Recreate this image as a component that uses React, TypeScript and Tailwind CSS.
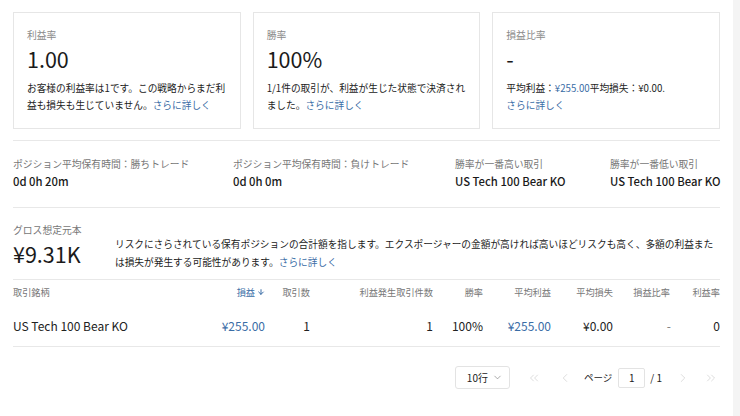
import { ChevronDown, ChevronLeft, ChevronRight, ChevronsLeft, ChevronsRight, ArrowDown } from "lucide-react";

const font = { fontFamily: '"Noto Sans CJK JP", "Noto Sans", sans-serif' };

function Link({ children }: { children: React.ReactNode }) {
  return <span className="text-[#3a6da6]">{children}</span>;
}

function Card({ label, value, children }: { label: string; value: string; children: React.ReactNode }) {
  return (
    <div className="border border-[#e6e6e6] px-[13px] pt-[14px] h-[117px]">
      <div className="text-[9.8px] leading-[16px] text-[#8a8a8a]">{label}</div>
      <div className="text-[21.5px] leading-[28px] mt-[2px] text-[#1a1a1a]">{value}</div>
      <div className="text-[9.7px] leading-[17px] mt-[7px] text-[#222]">{children}</div>
    </div>
  );
}

function Stat({ label, value }: { label: string; value: string }) {
  return (
    <div>
      <div className="text-[9.8px] leading-[17px] text-[#777] whitespace-nowrap">{label}</div>
      <div className="text-[11.3px] leading-[17px] font-medium text-[#1a1a1a] whitespace-nowrap">{value}</div>
    </div>
  );
}

const cols = "grid grid-cols-[187px_65px_45px_123px_50px_68px_62px_61px_46px]";

export default function App() {
  return (
    <div className="flex w-[740px] h-[416px] bg-white overflow-hidden" style={font}>
      <div className="w-[733px] pl-[13px] pr-[13px] pt-[12px]">
        <div className="grid grid-cols-3 gap-[12px]">
          <Card label="利益率" value="1.00">
            お客様の利益率は1です。この戦略からまだ利益も損失も生じていません。<Link>さらに詳しく</Link>
          </Card>
          <Card label="勝率" value="100%">
            1/1件の取引が、利益が生じた状態で決済されました。<Link>さらに詳しく</Link>
          </Card>
          <Card label="損益比率" value="-">
            平均利益：<Link>¥255.00</Link>平均損失：¥0.00.
            <br />
            <Link>さらに詳しく</Link>
          </Card>
        </div>

        <div className="border-t border-[#e8e8e8] mt-[11px] pt-[15px] pb-[17px]">
          <div className="grid grid-cols-[220px_222px_155px_1fr]">
            <Stat label="ポジション平均保有時間：勝ちトレード" value="0d 0h 20m" />
            <Stat label="ポジション平均保有時間：負けトレード" value="0d 0h 0m" />
            <Stat label="勝率が一番高い取引" value="US Tech 100 Bear KO" />
            <Stat label="勝率が一番低い取引" value="US Tech 100 Bear KO" />
          </div>
        </div>

        <div className="border-t border-[#e8e8e8] pt-[14px] pb-[8px] flex">
          <div className="w-[102px] shrink-0">
            <div className="text-[9.8px] leading-[17px] text-[#777]">グロス想定元本</div>
            <div className="text-[21.5px] leading-[30px] text-[#1a1a1a]">¥9.31K</div>
          </div>
          <div className="text-[9.7px] leading-[18px] text-[#222] pt-[13px]">
            リスクにさらされている保有ポジションの合計額を指します。エクスポージャーの金額が高ければ高いほどリスクも高く、多額の利益または損失が発生する可能性があります。<Link>さらに詳しく</Link>
          </div>
        </div>

        <div className="border-t border-[#e8e8e8]">
          <div className={`${cols} text-[9.2px] text-[#777] h-[25px] items-center`}>
            <div>取引銘柄</div>
            <div className="text-right text-[#3a6da6] flex justify-end items-center gap-[2px]">
              損益<ArrowDown size={8} strokeWidth={3} />
            </div>
            <div className="text-right">取引数</div>
            <div className="text-right">利益発生取引件数</div>
            <div className="text-right">勝率</div>
            <div className="text-right">平均利益</div>
            <div className="text-right">平均損失</div>
            <div className="text-right pr-[4px]">損益比率</div>
            <div className="text-right">利益率</div>
          </div>
          <div className={`${cols} text-[12px] text-[#222] h-[42px] items-center border-b border-[#e8e8e8]`}>
            <div>US Tech 100 Bear KO</div>
            <div className="text-right text-[#3a6da6]">¥255.00</div>
            <div className="text-right">1</div>
            <div className="text-right">1</div>
            <div className="text-right">100%</div>
            <div className="text-right text-[#3a6da6]">¥255.00</div>
            <div className="text-right">¥0.00</div>
            <div className="text-right pr-[3px] text-[#777]">-</div>
            <div className="text-right">0</div>
          </div>
        </div>

        <div className="flex justify-end items-center mt-[19px] text-[10px] text-[#222]">
          <div className="flex items-center gap-[4px] border border-[#e3e3e3] rounded-[3px] h-[23px] pl-[11px] pr-[6px]">
            10行<ChevronDown size={11} strokeWidth={1.2} className="text-[#666]" />
          </div>
          <ChevronsLeft size={14} strokeWidth={1.2} className="text-[#cfcfcf] ml-[17px]" />
          <ChevronLeft size={14} strokeWidth={1.2} className="text-[#cfcfcf] ml-[17px]" />
          <span className="ml-[12px] text-[9.5px]">ページ</span>
          <div className="ml-[6px] w-[27px] h-[20px] border border-[#e3e3e3] rounded-[2px] flex items-center justify-center">1</div>
          <span className="ml-[5px]">/ 1</span>
          <ChevronRight size={14} strokeWidth={1.2} className="text-[#cfcfcf] ml-[14px]" />
          <ChevronsRight size={14} strokeWidth={1.2} className="text-[#cfcfcf] ml-[14px] mr-[2px]" />
        </div>
      </div>
      <div className="w-[7px] bg-[#f4f4f4]" />
    </div>
  );
}
